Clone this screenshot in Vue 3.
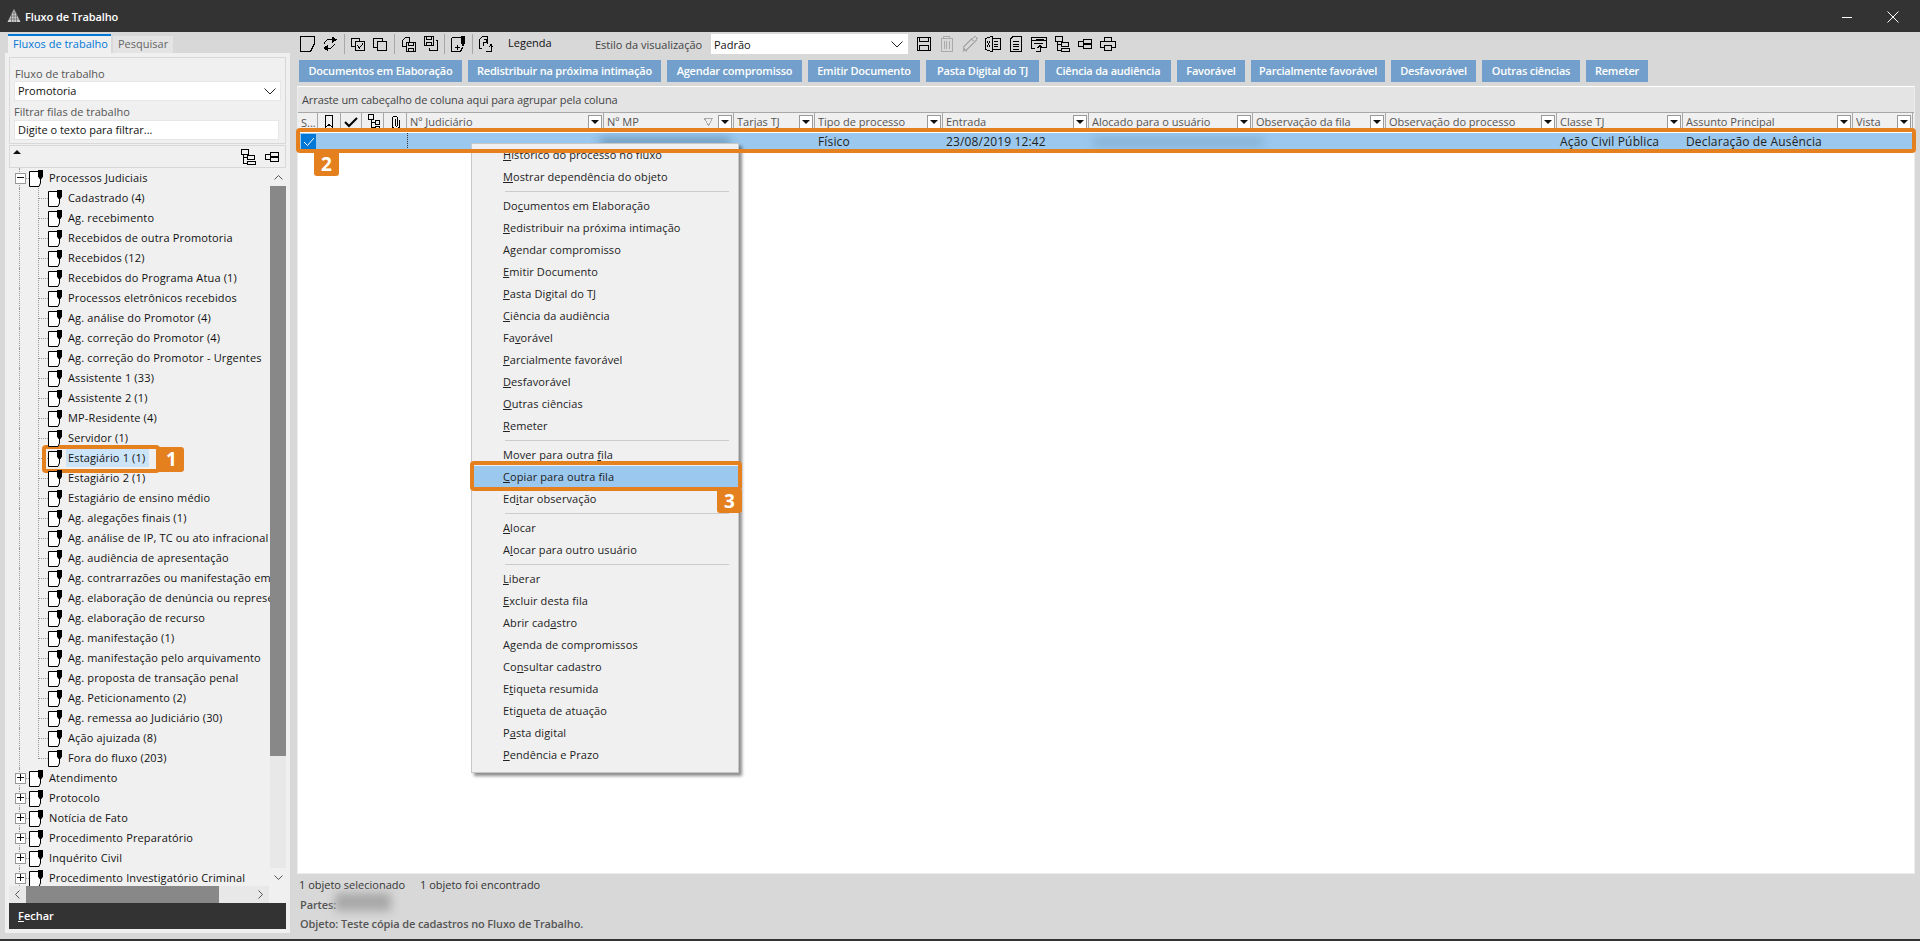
<script setup>
const rootNodes = ['Atendimento', 'Protocolo', 'Notícia de Fato', 'Procedimento Preparatório', 'Inquérito Civil', 'Procedimento Investigatório Criminal']
const queues = [
  'Cadastrado (4)', 'Ag. recebimento', 'Recebidos de outra Promotoria', 'Recebidos (12)', 'Recebidos do Programa Atua (1)',
  'Processos eletrônicos recebidos', 'Ag. análise do Promotor (4)', 'Ag. correção do Promotor (4)', 'Ag. correção do Promotor - Urgentes',
  'Assistente 1 (33)', 'Assistente 2 (1)', 'MP-Residente (4)', 'Servidor (1)', 'Estagiário 1 (1)', 'Estagiário 2 (1)',
  'Estagiário de ensino médio', 'Ag. alegações finais (1)', 'Ag. análise de IP, TC ou ato infracional', 'Ag. audiência de apresentação',
  'Ag. contrarrazões ou manifestação em', 'Ag. elaboração de denúncia ou represe', 'Ag. elaboração de recurso', 'Ag. manifestação (1)',
  'Ag. manifestação pelo arquivamento', 'Ag. proposta de transação penal', 'Ag. Peticionamento (2)', 'Ag. remessa ao Judiciário (30)',
  'Ação ajuizada (8)', 'Fora do fluxo (203)'
]
const actions = ['Documentos em Elaboração', 'Redistribuir na próxima intimação', 'Agendar compromisso', 'Emitir Documento', 'Pasta Digital do TJ',
  'Ciência da audiência', 'Favorável', 'Parcialmente favorável', 'Desfavorável', 'Outras ciências', 'Remeter']
const columns = [
  { label: 'Nº Judiciário' }, { label: 'Nº MP', filtered: true }, { label: 'Tarjas TJ' }, { label: 'Tipo de processo' }, { label: 'Entrada' },
  { label: 'Alocado para o usuário' }, { label: 'Observação da fila' }, { label: 'Observação do processo' }, { label: 'Classe TJ' },
  { label: 'Assunto Principal' }, { label: 'Vista' }
]

// t = text, u = index of the underlined mnemonic letter, sep = separator line after the item
const menu = [
  { t: 'Histórico do processo no fluxo', u: 0 }, { t: 'Mostrar dependência do objeto', u: 0, sep: true },
  { t: 'Documentos em Elaboração', u: 2 }, { t: 'Redistribuir na próxima intimação', u: 0 }, { t: 'Agendar compromisso', u: 1 },
  { t: 'Emitir Documento', u: 0 }, { t: 'Pasta Digital do TJ', u: 0 }, { t: 'Ciência da audiência', u: 0 }, { t: 'Favorável', u: 2 },
  { t: 'Parcialmente favorável', u: 0 }, { t: 'Desfavorável', u: 0 }, { t: 'Outras ciências', u: 0 }, { t: 'Remeter', u: 0, sep: true },
  { t: 'Mover para outra fila', u: 17 }, { t: 'Copiar para outra fila', u: 0, active: true }, { t: 'Editar observação', u: 2, sep: true },
  { t: 'Alocar', u: 0 }, { t: 'Alocar para outro usuário', u: 1, sep: true },
  { t: 'Liberar', u: 0 }, { t: 'Excluir desta fila', u: 0 }, { t: 'Abrir cadastro', u: 9 }, { t: 'Agenda de compromissos', u: 1 },
  { t: 'Consultar cadastro', u: 2 }, { t: 'Etiqueta resumida', u: 1 }, { t: 'Etiqueta de atuação', u: 3 }, { t: 'Pasta digital', u: 1 }, { t: 'Pendência e Prazo', u: 0 }
]

const ic = {
  page: { d: 'M1.5 1.5H15.5V8.5L11.5 16.5H1.5Z' },
  refresh: { d: 'M3.5 8.5V7.5L6.5 4.5H12.5M3.5 13.5H9.5L13.5 9.500V8.5', f: 'M11 1.5L16 4.5L11 8ZM7 9.5L2 13L7 16.5Z' },
  copyCheck: { d: 'M5.5 11.5H2.5V3.5H10.5V5.5M6.5 6.5H15.5V15.5H6.5ZM8.5 10.5L10.5 13L14 8.5' },
  copy: { d: 'M6.5 12.5H2.5V3.5H11.5V6.5M6.5 6.5H15.5V15.5H6.5Z' },
  saveCopy: { d: 'M6.5 11.5H3.5V5.5L6.5 2.5H10.5V6.5M7.5 7.5H16.5V16.5H7.5ZM9.5 7.5V10.5H14.5V7.5M9.5 16.5V13.5H14.5V16.5' },
  saveOut: { d: 'M3.5 1.5H12.5V10.5H3.5ZM5.5 1.5V4.5H10.5V1.5M5.5 10.5V7.5H10.5V10.5M14.5 5.5H16.5V15.5H8.5V12.5' },
  flagPlus: { d: 'M2.5 2.5H12.5M2.5 2.5V16.5H11.5L13.5 12.5M5.5 12H10.5M8 9.5V14.5', f: 'M12 1H16V8L14.5 11H13.5L12 8Z' },
  legend: { d: 'M4.5 13.5H2.5V4.5L5.5 1.5H10.5V9M6.5 4.5H9.5V7.5H6.5V10.5M14 10V16.5H9M12 12L14 9.5L16 12' },
  save: { d: 'M2.5 2.5H15.5V15.5H2.5ZM4.5 2.5V6.5H13.5V2.5M4.5 15.5V10.5H13.5V15.5' },
  trash: { d: 'M3.5 3.5H14.5V16.5H3.5ZM6 3.5V1.5H12V3.5M6.5 6V14M9 6V14M11.5 6V14', gray: true },
  pencil: { d: 'M2.5 16.5V12.5L11.5 3.5L15 1.5L16.5 3.5L15.5 5.5L6.5 14.5ZM2.5 12.5L6.5 16.5M11 4L14.5 7', gray: true },
  excel: { d: 'M1.5 3.5L8.5 1.5V16.5L1.5 14.5ZM8.5 3.5H16.5V14.5H8.5M3.5 6.5L6.5 11.5M6.5 6.5L3.5 11.5M10.5 6.5H14.5M10.5 9H14.5M10.5 11.5H14.5' },
  list: { d: 'M6.5 1.5H14.5V16.5H3.5V4.5ZM6 6.5H12M6 9H12M6 11.5H12M6 14H12' },
  export: { d: 'M5.5 13.5H1.5V2.5H16.5V12.5H13M1.5 5.5H16.5M4 8.5H13M6.5 4H14M10.5 11V16.5H6M8 13L10.5 10.5L13 13' },
  expand: { d: 'M2.5 1.5H9.5V6.5H2.5ZM4.5 6.5V15.5H8.5M4.5 9.5H8.5M8.5 7.5H15.5V11.5H8.5ZM8.5 13.5H16.5V16.5H8.5Z' },
  collapse: { d: 'M7.5 4.5H15.5V8.5H7.5ZM7.5 9.5H15.5V13.5H7.5ZM7.5 6.5H2.5V11.5H7.5' },
  print: { d: 'M5.5 6.5V2.5H12.5V6.5M5.5 12.5H1.5V6.5H16.5V12.5H12.5M5.5 10.5H12.5V15.5H5.5Z' }
}
const toolbarLeft = [['page', 'refresh'], ['copyCheck', 'copy'], ['saveCopy', 'saveOut'], ['flagPlus'], ['legend']]
const toolbarRight = ['save', 'trash', 'pencil', 'excel', 'list', 'export', 'expand', 'collapse', 'print']
const headIcons = [
  { d: 'M5.5 2.5H12.5V14.5L9 11.5L5.5 14.5Z' },
  { d: 'M3 9L7 13L15 5', heavy: true },
  { d: 'M4.5 1.5H9.5V6.5H4.5ZM7 6.5V14.5H11.5M7 9.500H11.5M11.5 7.5H15.5V11.5H11.5ZM11.5 13H15.5V16.500H11.5Z' },
  { d: 'M13.5 6.5V12.5A3.5 3.5 0 0 1 6.5 12.5V5.5A2.3 2.3 0 0 1 11.5 5.5V12A1 1 0 0 1 9 12V6' }
]
</script>

<template>
  <div class="window">
    <header class="titlebar">
      <svg class="logo" width="14" height="14" viewBox="0 0 14 14">
        <path d="M7 0L13.5 13H.5Z" fill="#cfcfcf" />
        <path d="M2 10H12M3.500 7H10.500M5 4H9M7 0V13M4.500 5V13M9.500 5V13" stroke="#555" stroke-width=".6" />
      </svg>
      <span class="title">Fluxo de Trabalho</span>
      <svg class="winbtns" width="62" height="16" viewBox="0 0 62 16">
        <path d="M0 8.500H10M45.500 2.500L56.500 13.500M56.500 2.500L45.500 13.500" stroke="#fff" fill="none" />
      </svg>
    </header>

    <div class="body">
      <aside class="side">
        <div class="tabs">
          <div class="tab on">Fluxos de trabalho</div>
          <div class="tab">Pesquisar</div>
        </div>
        <div class="sidepanel">
          <div class="filters">
            <label class="lbl first">Fluxo de trabalho</label>
            <div class="field combo">
              <span>Promotoria</span>
              <svg width="12" height="7" viewBox="0 0 12 7"><path d="M.5 .5L6 6L11.500 .5" fill="none" stroke="#222" /></svg>
            </div>
            <label class="lbl">Filtrar filas de trabalho</label>
            <div class="field short">Digite o texto para filtrar...</div>
          </div>
          <div class="treebar">
            <span class="up"></span>
            <svg class="ico" viewBox="0 0 18 18"><path :d="ic.expand.d" /></svg>
            <svg class="ico" viewBox="0 0 18 18"><path :d="ic.collapse.d" /></svg>
          </div>
          <div class="treewrap">
            <div class="tree">
              <div class="node root">
                <span class="box"><i></i></span>
                <svg class="doc" width="15" height="17" viewBox="0 0 15 17"><path class="o" d="M.5 1.500H11.500V13L10 16.500H.5Z" /><path d="M9 0H14V6.500L12.500 9H10.500L9 6.500Z" /></svg>
                <span class="txt">Processos Judiciais</span>
              </div>
              <div v-for="(q, i) in queues" :key="q" class="node child" :class="{ last: i === queues.length - 1 }">
                <svg class="doc" width="15" height="17" viewBox="0 0 15 17"><path class="o" d="M.5 1.500H11.500V13L10 16.500H.5Z" /><path d="M9 0H14V6.500L12.500 9H10.500L9 6.500Z" /></svg>
                <span class="txt" :class="{ sel: q === 'Estagiário 1 (1)' }">{{ q }}</span>
              </div>
              <div v-for="n in rootNodes" :key="n" class="node root">
                <span class="box plus"><i></i></span>
                <svg class="doc" width="15" height="17" viewBox="0 0 15 17"><path class="o" d="M.5 1.500H11.500V13L10 16.500H.5Z" /><path d="M9 0H14V6.500L12.500 9H10.500L9 6.500Z" /></svg>
                <span class="txt">{{ n }}</span>
              </div>
            </div>
            <div class="vscroll">
              <span class="arrow">
                <svg width="9" height="5" viewBox="0 0 9 5"><path d="M.5 4.500L4.500 .5L8.500 4.500" fill="none" stroke="#555" /></svg>
              </span>
              <div class="vthumb"></div>
              <span class="spacer"></span>
              <span class="arrow">
                <svg width="9" height="5" viewBox="0 0 9 5"><path d="M.5 .5L4.500 4.500L8.500 .5" fill="none" stroke="#555" /></svg>
              </span>
            </div>
          </div>
          <div class="hscroll">
            <span class="harrow"><svg width="5" height="9" viewBox="0 0 5 9"><path d="M4.500 .5L.5 4.500L4.500 8.500" fill="none" stroke="#555" /></svg></span>
            <div class="hthumb"></div>
            <span class="spacer"></span>
            <span class="harrow"><svg width="5" height="9" viewBox="0 0 5 9"><path d="M.5 .5L4.500 4.500L.5 8.500" fill="none" stroke="#555" /></svg></span>
            <span class="corner"></span>
          </div>
          <div class="close"><u>F</u>echar</div>
        </div>
      </aside>

      <main class="main">
        <div class="toolbar">
          <template v-for="(group, g) in toolbarLeft" :key="g">
            <span v-if="g" class="sep"></span>
            <svg v-for="name in group" :key="name" class="tool" viewBox="0 0 18 18">
              <path :d="ic[name].d" />
              <path v-if="ic[name].f" class="solid" :d="ic[name].f" />
            </svg>
          </template>
          <span class="legend">Legenda</span>
          <span class="viewlabel">Estilo da visualização</span>
          <div class="viewselect">
            <span>Padrão</span>
            <svg width="12" height="7" viewBox="0 0 12 7"><path d="M.5 .5L6 6L11.500 .5" fill="none" stroke="#222" /></svg>
          </div>
          <svg v-for="name in toolbarRight" :key="name" class="tool wide" :class="{ gray: ic[name].gray }" viewBox="0 0 18 18">
            <path :d="ic[name].d" />
          </svg>
        </div>

        <div class="actions">
          <div v-for="a in actions" :key="a" class="action">{{ a }}</div>
        </div>

        <section class="grid">
          <div class="groupbar">Arraste um cabeçalho de coluna aqui para agrupar pela coluna</div>
          <div class="gridhead cols">
            <div class="hcell first">S...</div>
            <div v-for="h in headIcons" :key="h.d" class="hcell icon">
              <svg :class="{ heavy: h.heavy }" width="18" height="18" viewBox="0 0 18 18"><path :d="h.d" /></svg>
            </div>
            <div v-for="c in columns" :key="c.label" class="hcell">
              <span class="hlabel">{{ c.label }}</span>
              <svg v-if="c.filtered" class="funnel" width="9" height="8" viewBox="0 0 9 8"><path d="M.5 .5H8.500L4.500 7.500Z" /></svg>
              <span class="drop"></span>
            </div>
          </div>
          <div class="gridrow cols">
            <div class="cell check">
              <span class="checked">
                <svg width="12" height="10" viewBox="0 0 12 10"><path d="M1 5L4.500 8.500L11 1" fill="none" stroke="#fff" /></svg>
              </span>
            </div>
            <div class="cell"></div>
            <div class="cell"></div>
            <div class="cell"></div>
            <div class="cell"></div>
            <div class="cell dotted"></div>
            <div class="cell"><span class="blur b1"></span></div>
            <div class="cell"></div>
            <div class="cell">Físico</div>
            <div class="cell">23/08/2019 12:42</div>
            <div class="cell"><span class="blur b2"></span></div>
            <div class="cell"></div>
            <div class="cell"></div>
            <div class="cell">Ação Civil Pública</div>
            <div class="cell">Declaração de Ausência</div>
            <div class="cell"></div>
          </div>
        </section>

        <footer class="status">
          <div class="counts"><span>1 objeto selecionado</span><span>1 objeto foi encontrado</span></div>
          <div class="strong parts">Partes:<span class="blur b3"></span></div>
          <div class="strong">Objeto: Teste cópia de cadastros no Fluxo de Trabalho.</div>
        </footer>
      </main>
    </div>

    <div class="bottomline"></div>

    <!-- context menu and tutorial callouts lie over the page -->
    <nav class="menu">
      <template v-for="m in menu" :key="m.t">
        <div class="mitem" :class="{ active: m.active }">{{ m.t.slice(0, m.u) }}<u>{{ m.t[m.u] }}</u>{{ m.t.slice(m.u + 1) }}</div>
        <div v-if="m.sep" class="msep"></div>
      </template>
    </nav>

    <div class="mark m1"></div>
    <div class="num n1">1</div>
    <div class="mark m2"></div>
    <div class="num n2">2</div>
    <div class="mark m3"></div>
    <div class="num n3">3</div>
  </div>
</template>

<style scoped>
.window {
  position: relative;
  height: 941px;
  overflow: hidden;
  display: flex;
  flex-direction: column;
  background: #d8d8d8;
  font-family: "Open Sans", "Noto Sans", sans-serif;
  font-size: 11px;
  color: #111;
}
u { text-underline-offset: 1px; }

.titlebar {
  height: 32px;
  flex: none;
  background: #333;
  display: flex;
  align-items: center;
  padding-left: 7px;
  color: #fff;
}
.logo { margin-right: 4px; }
.title { font-weight: 600; font-size: 11px; letter-spacing: -.1px; }
.winbtns { margin-left: auto; margin-right: 16px; margin-top: 2px; }

.body { flex: 1; display: flex; min-height: 0; }
.side { width: 297px; flex: none; padding: 2px 0 6px 5px; box-sizing: border-box; display: flex; flex-direction: column; }

.tabs { display: flex; padding-left: 3px; height: 19px; flex: none; align-items: flex-end; gap: 2px; }
.tab { height: 17px; line-height: 16px; padding: 0 5px; background: #e4e4e4; color: #666; white-space: nowrap; }
.tab.on { box-sizing: border-box; height: 19px; background: #f0f0f0; border-top: 2px solid #0078d7; color: #0078d7; width: 103px; }

.sidepanel { flex: 1; width: 285px; background: #f0f0f0; padding: 4px; box-sizing: border-box; display: flex; flex-direction: column; min-height: 0; }
.filters { height: 87px; flex: none; border: 1px solid #d8d8d8; box-sizing: border-box; padding: 0 4px; }
.lbl { display: block; color: #555; height: 16px; line-height: 16px; margin-top: 3px; }
.lbl.first { margin-top: 8px; padding-left: 1px; height: 15px; }
.field { height: 20px; line-height: 18px; background: #fff; border: 1px solid #e6e6e6; box-sizing: border-box; padding-left: 3px; color: #111; }
.field.short { width: 265px; }
.combo { display: flex; align-items: center; justify-content: space-between; padding-right: 4px; width: 267px; }
.treebar { height: 23px; flex: none; margin-top: 1px; border: 1px solid #d8d8d8; box-sizing: border-box; display: flex; align-items: center; padding: 0 4px 0 3px; gap: 6px; }
.up { width: 0; height: 0; border: 4px solid transparent; border-top: 0; border-bottom: 4px solid #111; margin-right: auto; margin-bottom: 9px; }
.ico { width: 18px; height: 18px; fill: none; stroke: #000; shape-rendering: crispEdges; }

.treewrap { flex: 1; display: flex; min-height: 0; }
.tree { flex: 1; min-width: 0; overflow: hidden; letter-spacing: .15px; }
.node { position: relative; height: 20px; display: flex; align-items: center; white-space: nowrap; }
.node.root { padding-left: 20px; }
.node.child { padding-left: 39px; }
.node::before {
  content: "";
  position: absolute;
  left: 10px;
  top: 0;
  bottom: 0;
  border-left: 1px dotted #999;
}
.node.child:not(.last) {
  background: repeating-linear-gradient(#999 0 1px, transparent 1px 2px) 29px 0 / 1px 100% no-repeat;
}
.node.child::after {
  content: "";
  position: absolute;
  left: 29px;
  top: 0;
  height: 10px;
  width: 9px;
  border-left: 1px dotted #999;
  border-bottom: 1px dotted #999;
}
.node.root::after {
  content: "";
  position: absolute;
  left: 15px;
  top: 10px;
  width: 5px;
  border-bottom: 1px dotted #999;
}
.doc { flex: none; margin-right: 5px; position: relative; z-index: 1; }
.doc path { fill: #000; }
.doc path.o { fill: #fff; stroke: #000; }
.box {
  position: absolute;
  left: 6px;
  top: 5px;
  width: 9px;
  height: 9px;
  background: #fff;
  border: 1px solid #999;
  z-index: 1;
}
.box i { position: absolute; left: 1px; top: 3px; width: 7px; height: 1px; background: #111; }
.box.plus i::after { content: ""; position: absolute; left: 3px; top: -3px; width: 1px; height: 7px; background: #111; }
.txt { line-height: 18px; }
.txt.sel { background: #cce4f7; padding: 0 4px 0 2px; margin-left: -2px; }

.vscroll { width: 16px; flex: none; display: flex; flex-direction: column; background: #e8e8e8; }
.arrow { height: 18px; flex: none; display: flex; align-items: center; justify-content: center; background: #f0f0f0; }
.vthumb { height: 570px; flex: none; background: #888; }
.spacer { flex: 1; }
.hscroll { height: 17px; flex: none; display: flex; background: #e8e8e8; align-items: stretch; }
.harrow { width: 17px; flex: none; display: flex; align-items: center; justify-content: center; }
.hthumb { width: 193px; flex: none; background: #888; }
.corner { width: 17px; flex: none; background: #f0f0f0; }
.close { height: 26px; flex: none; background: #333; color: #fff; line-height: 26px; padding-left: 9px; font-weight: 600; }

.main { flex: 1; min-width: 0; display: flex; flex-direction: column; }
.toolbar { height: 28px; flex: none; display: flex; align-items: center; box-sizing: border-box; padding-bottom: 4px; }
.tool { width: 18px; height: 18px; flex: none; padding: 0 2px; fill: none; stroke: #000; shape-rendering: crispEdges; }
.tool.wide { padding: 0 2.5px; }
.tool .solid { fill: #000; stroke: none; }
.tool.gray { stroke: #aaa; }
.sep { width: 1px; height: 20px; background: #a8a8a8; margin: 0 2px 0 3px; flex: none; }
.legend { margin: 0 0 3px 11px; width: 87px; flex: none; }
.viewlabel { width: 116px; flex: none; color: #444; }
.viewselect { width: 197px; height: 20px; flex: none; margin-right: 4px; background: #fff; box-sizing: border-box; padding: 0 5px 0 3px; display: flex; align-items: center; justify-content: space-between; }

.actions {
  height: 22px;
  flex: none;
  margin: 0 0 4px 2px;
  display: grid;
  grid-template-columns: 163px 193px 135px 112px 113px 126px 68px 134px 85px 98px 62px;
  gap: 6px;
}
.action { background: #729fcb; color: #fff; text-align: center; line-height: 22px; font-weight: 600; white-space: nowrap; overflow: hidden; letter-spacing: -.2px; }

.grid { flex: 1; margin-right: 5px; background: #fff; border: 1px solid #ececec; border-top-color: #fff; display: flex; flex-direction: column; min-height: 0; }
.groupbar { height: 26px; flex: none; background: #e4e4e4; line-height: 26px; padding-left: 4px; color: #444; border-bottom: 1px solid #a8a8a8; box-sizing: border-box; letter-spacing: -.1px; }
.cols { display: grid; grid-template-columns: 20px 23px 21px 22px 23px 197px 130px 81px 128px 146px 164px 133px 171px 126px 170px 60px; }
.gridhead { height: 19px; flex: none; background: #f0f0f0; color: #555; }
.hcell { position: relative; display: flex; align-items: center; padding-left: 3px; border-right: 1px solid #a8a8a8; margin: 0 0 3px; white-space: nowrap; min-width: 0; }
.hcell.icon { padding: 0; justify-content: center; }
.hcell svg { fill: none; stroke: #000; shape-rendering: crispEdges; }
.hcell svg.heavy { stroke-width: 2; shape-rendering: auto; }
.hcell svg.funnel { stroke: #aaa; margin-right: 5px; flex: none; }
.hlabel { flex: 1; min-width: 0; overflow: hidden; padding-bottom: 2px; }
.drop { position: relative; width: 14px; height: 14px; flex: none; margin-right: 1px; background: #fff; border: 1px solid #999; box-sizing: border-box; }
.drop::after { content: ""; position: absolute; left: 2px; top: 4px; border: 4px solid transparent; border-bottom: 0; border-top: 4px solid #111; }

.gridrow { height: 17px; flex: none; margin-top: 1px; background: #9ac8ee; line-height: 17px; font-size: 12px; color: #222; letter-spacing: .15px; }
.cell { padding-left: 3px; white-space: nowrap; position: relative; min-width: 0; }
.cell.dotted { border-left: 1px dotted #333; box-sizing: border-box; }
.checked { width: 15px; height: 15px; margin-top: 1px; background: #0078d7; display: flex; align-items: center; justify-content: center; }
.blur { position: absolute; display: block; background: #6a93b5; filter: blur(5px); }
.b1 { left: -4px; top: 5px; width: 130px; height: 8px; }
.b2 { left: 4px; top: 5px; width: 170px; height: 8px; opacity: .5; }
.b3 { left: 36px; top: -2px; width: 56px; height: 18px; background: #a8a8a8; }

.status { height: 65px; flex: none; padding-left: 2px; color: #333; }
.counts { display: flex; height: 20px; align-items: center; }
.counts span:first-child { width: 121px; }
.strong { font-weight: 600; height: 19px; line-height: 20px; color: #555; position: relative; padding-left: 1px; letter-spacing: -.12px; }
.parts { margin-top: 1px; }

.bottomline { height: 2px; flex: none; background: #333; }

.menu {
  position: absolute;
  left: 471px;
  top: 143px;
  width: 268px;
  box-sizing: border-box;
  background: #f0f0f0;
  border: 1px solid #c8c8c8;
  box-shadow: 3px 3px 3px rgba(0, 0, 0, .45);
  padding-bottom: 6px;
}
.mitem { height: 22px; line-height: 22px; padding-left: 31px; color: #222; letter-spacing: .1px; }
.mitem.active { background: #9ac8ee; }
.msep { height: 1px; margin: 3px 9px 3px 33px; background: #ccc; }

.mark { position: absolute; border: 4px solid #e5801f; border-radius: 4px; box-sizing: border-box; }
.m1 { left: 42px; top: 445px; width: 118px; height: 28px; }
.m2 { left: 296px; top: 128px; width: 1620px; height: 25px; }
.m3 { left: 470px; top: 461px; width: 272px; height: 30px; }
.num { position: absolute; width: 25px; background: #e5801f; color: #fff; font-weight: 700; font-size: 19px; text-align: center; border-radius: 0 0 3px 3px; }
.n1 { left: 159px; top: 447px; height: 25px; line-height: 25px; border-radius: 0 3px 3px 0; }
.n2 { left: 314px; top: 152px; height: 24px; line-height: 24px; }
.n3 { left: 717px; top: 490px; height: 23px; line-height: 23px; }
</style>

<style>
body { margin: 0; }
</style>
